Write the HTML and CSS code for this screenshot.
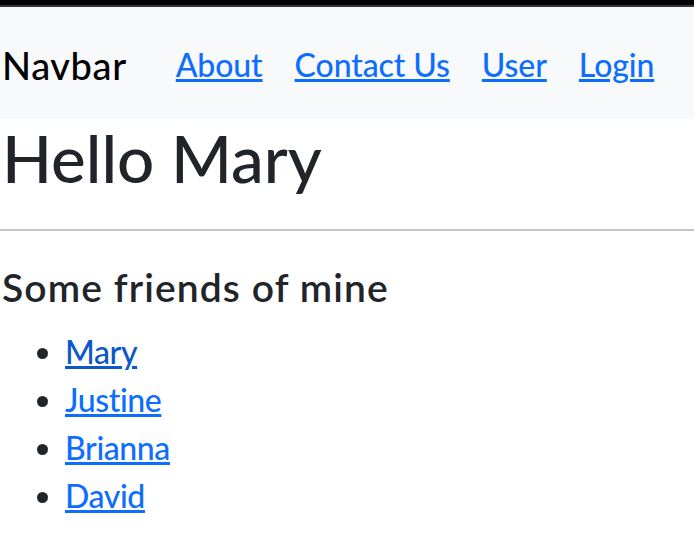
FILE: index.html
```html
<!DOCTYPE html>
<html>
<head>
<meta charset="utf-8">
<link rel="stylesheet" href="styles.css">
</head>
<body>
<div class="topstrip"></div>
<nav class="navbar">
  <span class="brand">Navbar</span>
  <div class="nav-links">
    <a href="#">About</a>
    <a href="#">Contact Us</a>
    <a href="#">User</a>
    <a href="#">Login</a>
  </div>
</nav>
<h1 class="title">Hello Mary</h1>
<hr class="rule">
<h3 class="subtitle">Some friends of mine</h3>
<ul class="friends">
  <li><a href="#" class="visited">Mary</a></li>
  <li><a href="#">Justine</a></li>
  <li><a href="#">Brianna</a></li>
  <li><a href="#">David</a></li>
</ul>
</body>
</html>
```

FILE: styles.css
```css
html, body {
  margin: 0;
  padding: 0;
  background: #fff;
}
body {
  font-family: "Lato", "Noto Sans", sans-serif;
  font-weight: 500;
  color: #212529;
}
.topstrip {
  height: 5px;
  background: #020203;
  border-bottom: 2px solid #34373c;
}
.navbar {
  box-sizing: border-box;
  background: #f8f9fa;
  height: 112px;
  display: flex;
  align-items: center;
  padding: 4px 0 0 2px;
  white-space: nowrap;
}
.brand {
  font-size: 38px;
  letter-spacing: 0.6px;
  color: #000;
  line-height: 57px;
  flex-shrink: 0;
}
.nav-links {
  display: flex;
  gap: 32px;
  margin-left: 49px;
  flex-shrink: 0;
}
.nav-links a, .friends a {
  color: #0d6efd;
  text-decoration: underline;
  text-decoration-thickness: 3px;
  text-underline-offset: 2px;
}
.nav-links a {
  font-size: 32px;
  line-height: 48px;
  letter-spacing: -0.1px;
}
.title {
  margin: 0;
  padding-left: 2px;
  font-size: 65.5px;
  font-weight: 500;
  line-height: 78.6px;
}
.rule {
  border: 0;
  border-top: 2px solid #c4c4c4;
  margin: 31px 0 0;
}
.subtitle {
  margin: 33.5px 0 0;
  padding-left: 2px;
  font-size: 39px;
  font-weight: 600;
  letter-spacing: 1.1px;
  line-height: 46.8px;
}
.friends {
  margin: 17.5px 0 0;
  padding-left: 65px;
  font-size: 32px;
  line-height: 48px;
  letter-spacing: -0.4px;
}
.friends li::marker {
  color: #212529;
}
.friends a.visited {
  color: #0a58ca;
}
```
